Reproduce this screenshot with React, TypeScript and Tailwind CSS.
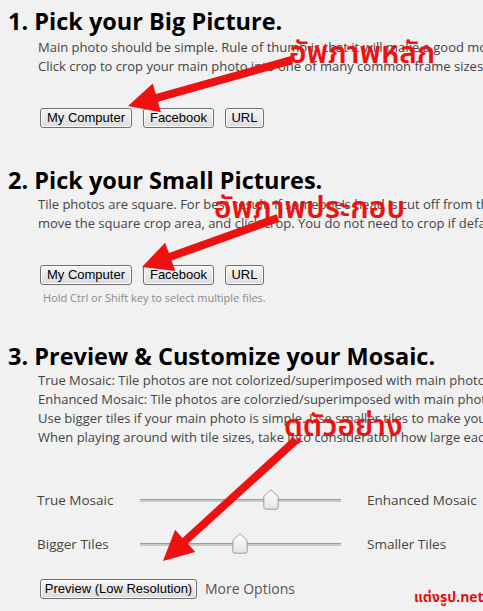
import React from "react";

const body = "'Open Sans', 'Noto Sans', sans-serif";

function Btn({ children, w }: { children: React.ReactNode; w: string }) {
  return (
    <button
      className={`h-[20px] ${w} rounded-[3px] border border-[#707070] bg-gradient-to-b from-[#f6f6f6] to-[#dcdcdc] text-[13px] leading-[18px] text-black shadow-[inset_0_0_0_1px_#fcfcfc] font-['Liberation_Sans',Arial,sans-serif]`}
    >
      {children}
    </button>
  );
}

function Thumb({ left }: { left: number }) {
  return (
    <svg
      width="16"
      height="21"
      viewBox="0 0 16 21"
      className="absolute top-[-11px]"
      style={{ left }}
    >
      <defs>
        <linearGradient id="tg" x1="0" y1="0" x2="0" y2="1">
          <stop offset="0" stopColor="#ffffff" />
          <stop offset="1" stopColor="#e4e4e4" />
        </linearGradient>
      </defs>
      <path
        d="M8 0.8 L15.2 7.5 L15.2 18 Q15.2 20.2 13 20.2 L3 20.2 Q0.8 20.2 0.8 18 L0.8 7.5 Z"
        fill="url(#tg)"
        stroke="#9a9a9a"
        strokeWidth="1"
      />
    </svg>
  );
}

function SliderRow({ left, right, thumb }: { left: string; right: string; thumb: number }) {
  return (
    <div className="flex items-center h-[24px]">
      <div className="w-[132px] pl-[29px] text-[13.5px] text-[#444]">{left}</div>
      <div className="relative w-[201px] h-[3px] bg-[#c8c8c8] border-t border-[#9c9c9c]">
        <Thumb left={thumb} />
      </div>
      <div className="pl-[26px] text-[13.5px] text-[#444]">{right}</div>
    </div>
  );
}

function arrow(tx: number, ty: number, hx: number, hy: number, L = 30, W = 15, t = 4) {
  const dx = hx - tx;
  const dy = hy - ty;
  const len = Math.hypot(dx, dy);
  const ux = dx / len;
  const uy = dy / len;
  const px = -uy;
  const py = ux;
  const bx = hx - ux * L;
  const by = hy - uy * L;
  const pts = [
    [tx + px * t, ty + py * t],
    [bx + px * t, by + py * t],
    [bx + px * W, by + py * W],
    [hx, hy],
    [bx - px * W, by - py * W],
    [bx - px * t, by - py * t],
    [tx - px * t, ty - py * t],
  ];
  return pts.map((p) => p.map((v) => v.toFixed(1)).join(",")).join(" ");
}

export default function App() {
  const thai = "'Noto Sans Thai', 'Noto Sans', 'DejaVu Sans', sans-serif";
  return (
    <div
      className="relative w-[483px] h-[611px] overflow-hidden bg-[#f1f1f1]"
      style={{ fontFamily: body }}
    >
      <div className="pl-[8px] whitespace-nowrap">
        <h1 className="mt-[6px] text-[23.5px] leading-[30px] font-bold text-black">
          1. Pick your Big Picture.
        </h1>
        <div className="mt-[2px] pl-[30px] text-[13px] leading-[19px] text-[#444]">
          <div>Main photo should be simple. Rule of thumb is that it will make a good mosaic if it's recognizable at small size.</div>
          <div>Click crop to crop your main photo into one of many common frame sizes.</div>
        </div>
        <div className="mt-[32px] pl-[32px] flex gap-[11px]">
          <Btn w="w-[92px]">My Computer</Btn>
          <Btn w="w-[71px]">Facebook</Btn>
          <Btn w="w-[39px]">URL</Btn>
        </div>

        <h1 className="mt-[37px] text-[23.5px] leading-[30px] font-bold text-black">
          2. Pick your Small Pictures.
        </h1>
        <div className="pl-[30px] text-[13px] leading-[19px] text-[#444]">
          <div>Tile photos are square. For best result, if someone's head is cut off from the tile photo,</div>
          <div>move the square crop area, and click crop. You do not need to crop if default is fine.</div>
        </div>
        <div className="mt-[32px] pl-[32px] flex gap-[11px]">
          <Btn w="w-[92px]">My Computer</Btn>
          <Btn w="w-[71px]">Facebook</Btn>
          <Btn w="w-[39px]">URL</Btn>
        </div>
        <div className="mt-[6px] pl-[35px] text-[11px] leading-[14px] text-[#8a8a8a]">
          Hold Ctrl or Shift key to select multiple files.
        </div>

        <h1 className="mt-[36px] text-[23.5px] leading-[30px] font-bold text-black">
          3. Preview &amp; Customize your Mosaic.
        </h1>
        <div className="pl-[30px] text-[13px] leading-[19px] text-[#444]">
          <div>True Mosaic: Tile photos are not colorized/superimposed with main photo.</div>
          <div>Enhanced Mosaic: Tile photos are colorzied/superimposed with main photo.</div>
          <div>Use bigger tiles if your main photo is simple. Use smaller tiles to make your mosaic detailed.</div>
          <div>When playing around with tile sizes, take into consideration how large each tile will be.</div>
        </div>

        <div className="mt-[41px] flex flex-col gap-[20px]">
          <SliderRow left="True Mosaic" right="Enhanced Mosaic" thumb={123} />
          <SliderRow left="Bigger Tiles" right="Smaller Tiles" thumb={92} />
        </div>

        <div className="mt-[22px] pl-[32px] flex items-center gap-[8px]">
          <Btn w="w-[157px]">Preview (Low Resolution)</Btn>
          <span className="text-[14px] text-[#555]">More Options</span>
        </div>
      </div>

      {/* annotations */}
      <svg className="absolute inset-0 pointer-events-none" width="483" height="611">
        <polygon points={arrow(292, 60, 128, 106)} fill="#ee1111" />
        <polygon points={arrow(278, 218, 142, 267)} fill="#ee1111" />
        <polygon points={arrow(296, 440, 163, 561)} fill="#ee1111" />
      </svg>
      <div
        className="absolute left-[289px] top-[34px] whitespace-nowrap text-[30px] leading-[40px] font-semibold text-[#ee1111]"
        style={{ fontFamily: thai }}
      >
        อัพภาพหลัก
      </div>
      <div
        className="absolute left-[214px] top-[189px] whitespace-nowrap text-[30px] leading-[40px] font-semibold text-[#ee1111]"
        style={{ fontFamily: thai }}
      >
        อัพภาพประกอบ
      </div>
      <div
        className="absolute left-[284px] top-[407px] whitespace-nowrap text-[30px] leading-[40px] font-semibold text-[#ee1111]"
        style={{ fontFamily: thai }}
      >
        ดูตัวอย่าง
      </div>
      <div
        className="absolute left-[414px] top-[589px] whitespace-nowrap text-[14px] leading-[18px] font-bold text-[#e01010]"
        style={{ fontFamily: thai }}
      >
        แต่งรูป.net
      </div>
    </div>
  );
}
